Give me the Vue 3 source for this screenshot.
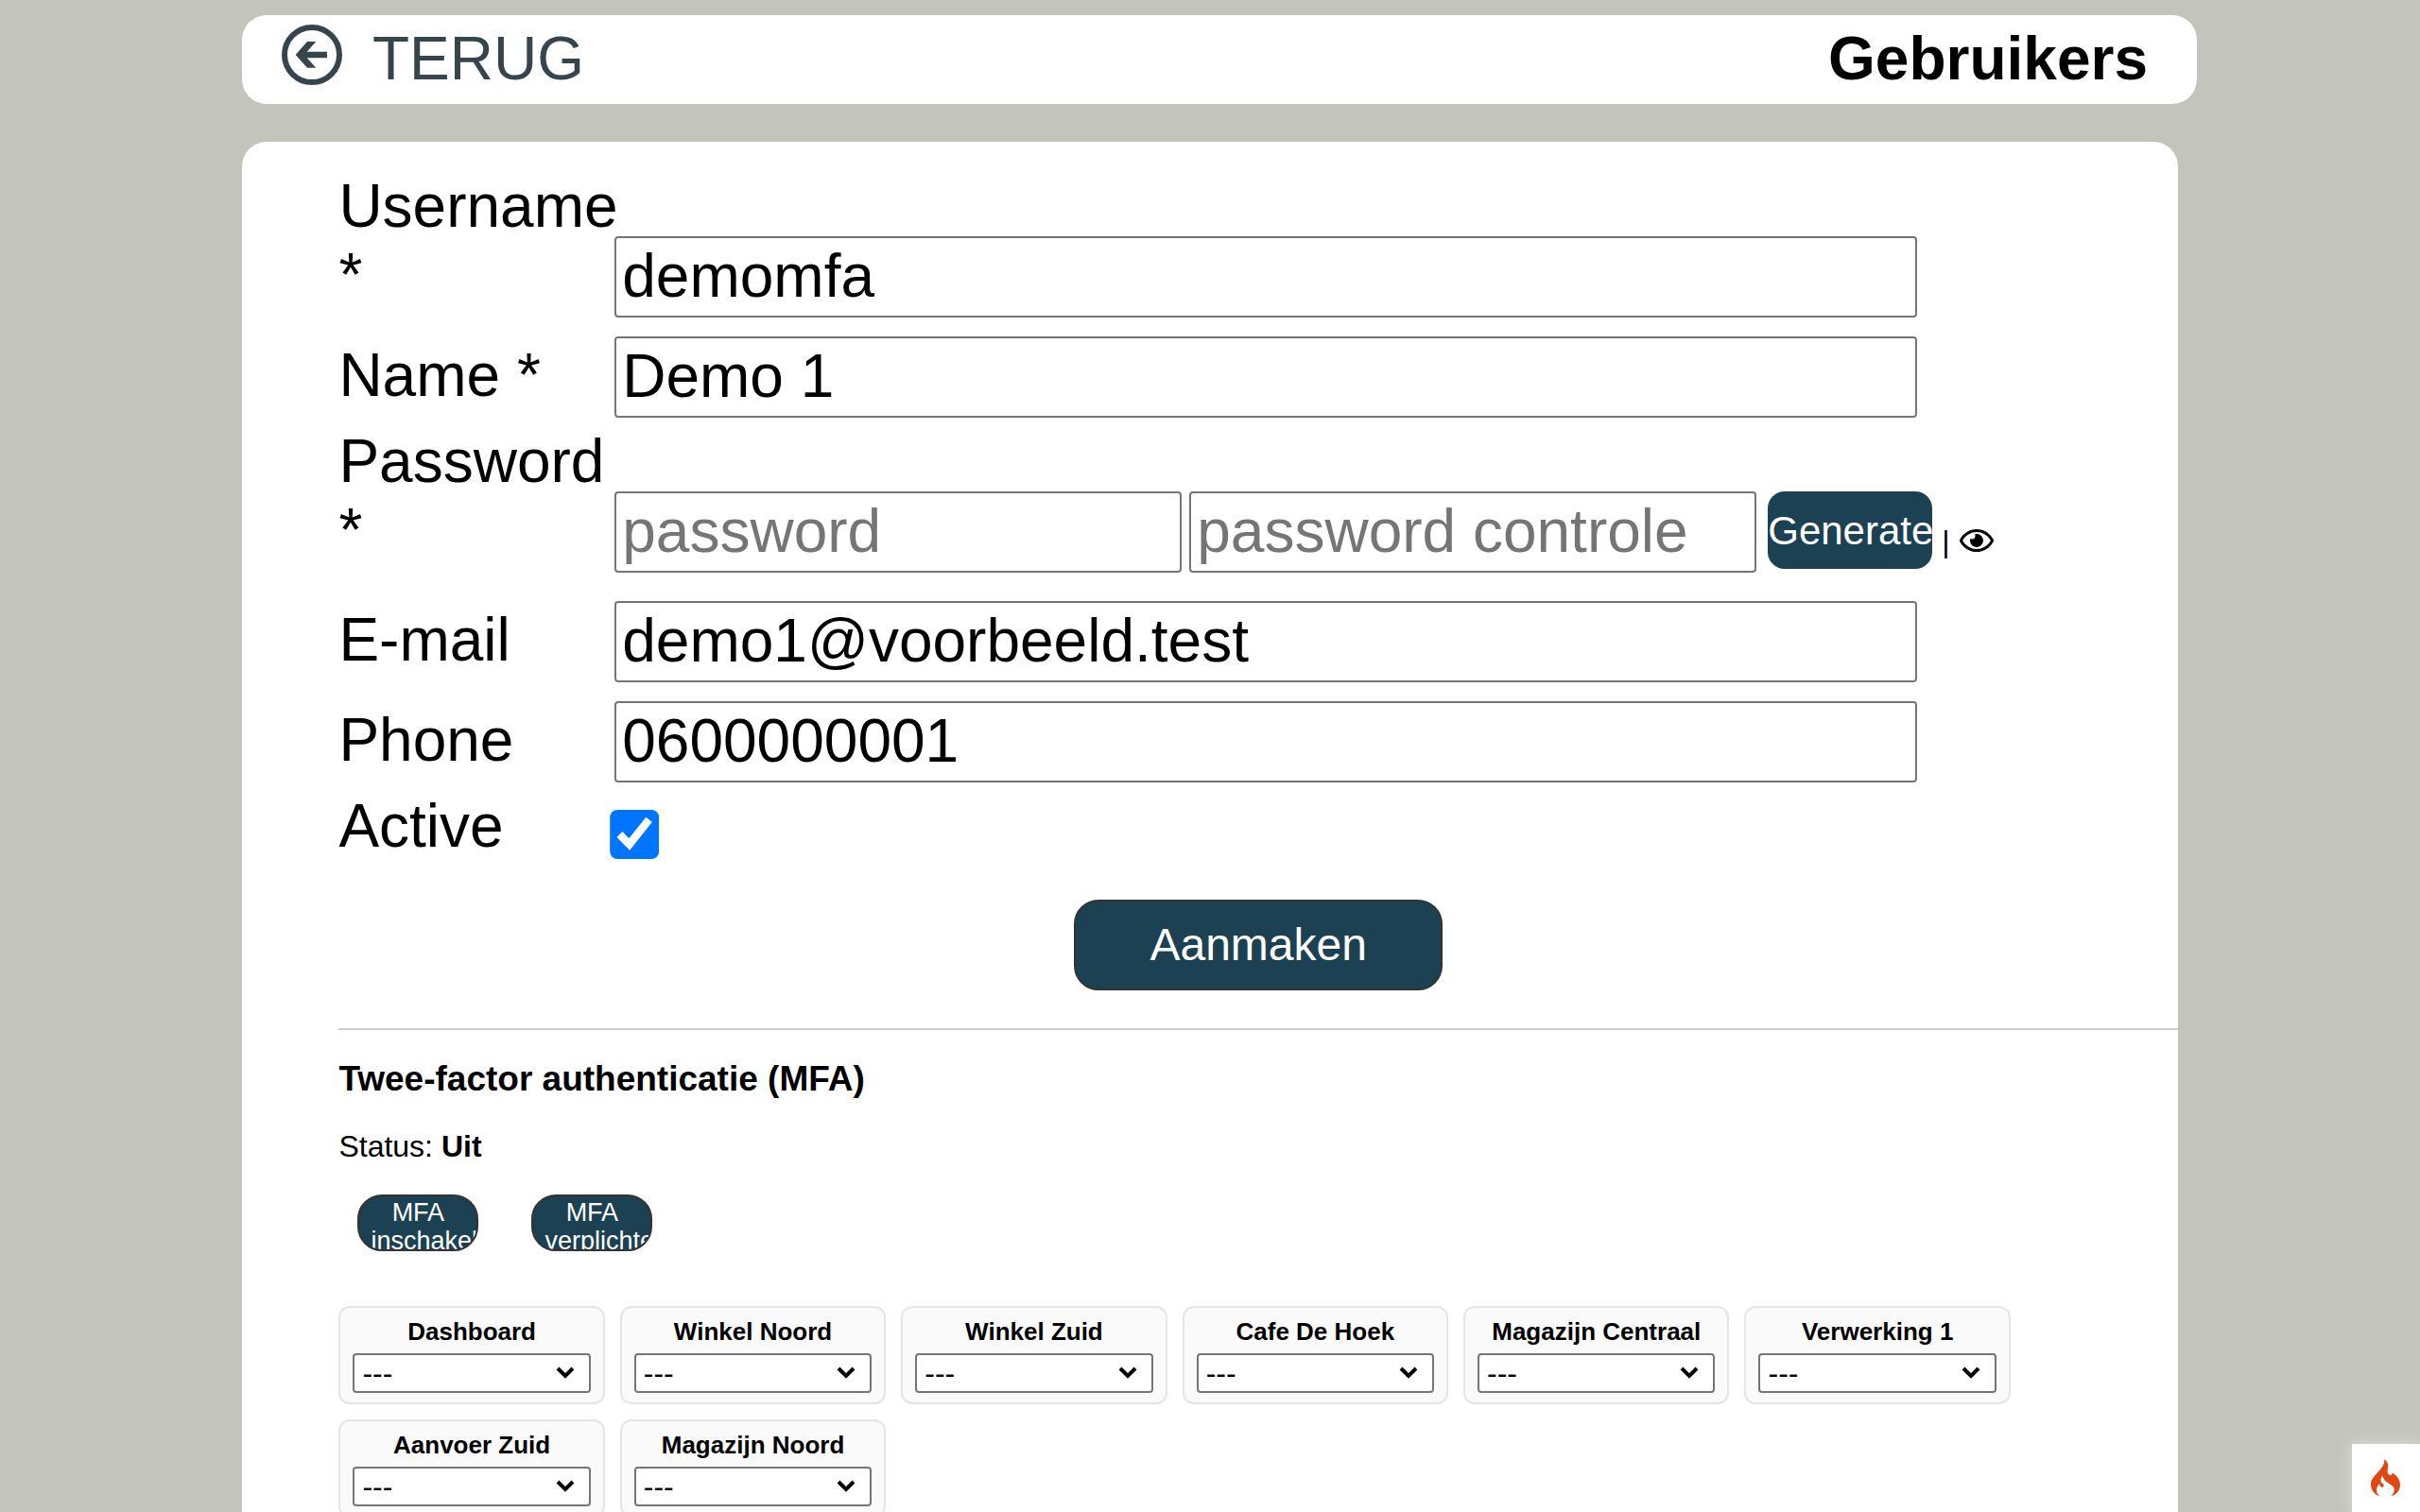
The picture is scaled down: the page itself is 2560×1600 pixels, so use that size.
<template>
  <div class="page">
    <header class="topbar">
      <a href="#" class="back">
        <svg class="back-icon" viewBox="0 0 192 192" aria-hidden="true">
          <circle cx="96" cy="96" r="87" fill="none" stroke="currentColor" stroke-width="18" />
          <path d="M44 96 81 54H109L80 86H144V106H80L109 137H81Z" fill="currentColor" />
        </svg>
        <span>TERUG</span>
      </a>
      <h1 class="title">Gebruikers</h1>
    </header>

    <main class="panel">
      <form @submit.prevent>
        <div class="row">
          <label for="username">Username *</label>
          <input id="username" v-model="user.username" type="text" class="field" />
        </div>
        <div class="row">
          <label for="name">Name *</label>
          <input id="name" v-model="user.name" type="text" class="field" />
        </div>
        <div class="row row-password">
          <label for="password">Password *</label>
          <div class="passwords">
            <input
              id="password"
              v-model="user.password"
              :type="passwordType"
              class="field"
              placeholder="password"
            />
            <input
              v-model="user.passwordCheck"
              :type="passwordType"
              class="field"
              placeholder="password controle"
              aria-label="password controle"
            />
            <button type="button" class="btn-generate" @click="generate">Generate</button>
            <span class="divider">|</span>
            <button type="button" class="btn-eye" aria-label="Toon password" @click="visible = !visible">
              <svg viewBox="0 64 576 384" aria-hidden="true">
                <path d="M288 144a110.94 110.94 0 0 0-31.24 5 55.4 55.4 0 0 1 7.24 27 56 56 0 0 1-56 56 55.4 55.4 0 0 1-27-7.24A111.71 111.71 0 1 0 288 144zm284.52 97.4C518.29 135.59 410.93 64 288 64S57.68 135.64 3.48 241.41a32.35 32.35 0 0 0 0 29.19C57.71 376.41 165.07 448 288 448s230.32-71.64 284.52-177.41a32.35 32.35 0 0 0 0-29.19zM288 400c-98.65 0-189.09-55-237.93-144C98.91 167 189.34 112 288 112s189.09 55 237.93 144C477.1 345 386.66 400 288 400z" />
              </svg>
            </button>
          </div>
        </div>
        <div class="row">
          <label for="email">E-mail</label>
          <input id="email" v-model="user.email" type="text" class="field" />
        </div>
        <div class="row">
          <label for="phone">Phone</label>
          <input id="phone" v-model="user.phone" type="text" class="field" />
        </div>
        <div class="row">
          <label for="active">Active</label>
          <input id="active" v-model="user.active" type="checkbox" class="check" />
        </div>
        <div class="submit">
          <button type="submit" class="btn-submit">Aanmaken</button>
        </div>
      </form>

      <section class="mfa">
        <h3>Twee-factor authenticatie (MFA)</h3>
        <p>Status: <b>Uit</b></p>
        <div class="mfa-actions">
          <button type="button" class="btn-small">MFA inschakelen</button>
          <button type="button" class="btn-small">MFA verplichten</button>
        </div>
      </section>

      <section class="rights">
        <div v-for="(place, i) in places" :key="place" class="card">
          <label :for="'right-' + i">{{ place }}</label>
          <div class="select-wrap">
            <select :id="'right-' + i">
              <option>---</option>
            </select>
            <svg class="chevron" viewBox="0 0 20 14" aria-hidden="true">
              <path d="M2 3 10 11 18 3" fill="none" stroke="#000" stroke-width="4" />
            </svg>
          </div>
        </div>
      </section>
    </main>

    <a href="#" class="debug" aria-label="Debug">
      <svg viewBox="0 0 93 120" aria-hidden="true">
        <path d="M28 118C10 111 0 97 0 80C0 52 45 34 43 1C54 9 56 18 54 29C51 41 54 50 61 51C67 51 69 48 68 43C81 52 93 64 93 83C93 99 82 112 64 118C71 112 76 104 74 94C72 82 53 78 43 66C39 60 38 56 39 52C31 60 29 68 34 75C39 80 43 81 41 86C37 92 27 90 28 78C16 88 14 106 28 118Z" />
      </svg>
    </a>
  </div>
</template>

<script setup>
import { reactive, ref, computed } from 'vue'

const user = reactive({
  username: 'demomfa',
  name: 'Demo 1',
  password: '',
  passwordCheck: '',
  email: 'demo1@voorbeeld.test',
  phone: '0600000001',
  active: true
})

const visible = ref(false)
const passwordType = computed(() => (visible.value ? 'text' : 'password'))

const places = [
  'Dashboard',
  'Winkel Noord',
  'Winkel Zuid',
  'Cafe De Hoek',
  'Magazijn Centraal',
  'Verwerking 1',
  'Aanvoer Zuid',
  'Magazijn Noord'
]

const generate = () => {
  const value = Math.random().toString(36).slice(2, 12)
  user.password = value
  user.passwordCheck = value
}
</script>

<style>
html,
body {
  height: 100%;
  margin: 0;
  background: #c3c4bb;
  overflow: hidden;
}

#app {
  height: 100%;
}
</style>

<style scoped>
.page {
  height: 100%;
  overflow: hidden;
  box-sizing: border-box;
  padding: 16px 10% 0;
  font-family: Arial, "Liberation Sans", sans-serif;
  font-size: 32px;
  color: #000;
}

button,
input,
select {
  font-family: inherit;
  box-sizing: border-box;
  margin: 0;
}

.topbar {
  display: flex;
  justify-content: space-between;
  align-items: flex-start;
  box-sizing: border-box;
  height: 94px;
  margin-right: -20px;
  padding: 10px 52px 0 42px;
  background: #fff;
  border-radius: 26px;
}

.back {
  display: flex;
  gap: 32px;
  font-size: 64px;
  line-height: 72px;
  color: #36454c;
  text-decoration: none;
}

.back-icon {
  width: 64px;
  height: 64px;
}

.title {
  margin: 0;
  font-size: 64px;
  line-height: 72px;
}

.panel {
  margin-top: 40px;
  min-height: 100%;
  box-sizing: border-box;
  padding: 32px 0 0 5%;
  background: #fff;
  border-radius: 26px;
}

.row {
  display: flex;
  align-items: flex-end;
}

.row-password {
  margin-bottom: 10px;
}

.row > label {
  flex: none;
  width: 15%;
  margin-bottom: 18px;
  font-size: 64px;
  line-height: 73px;
}

.field {
  width: 1378px;
  height: 86px;
  margin: 10px 0;
  padding: 0 6px 2px;
  font-size: 64px;
  color: #000;
  background: #fff;
  border: 2px solid #767676;
  border-radius: 4px;
}

.field::placeholder {
  color: #757575;
}

.passwords {
  display: flex;
  align-items: flex-start;
}

.passwords .field {
  width: 600px;
  margin-right: 8px;
}

.btn-generate {
  width: 174px;
  height: 82px;
  margin: 10px 0 0 4px;
  padding: 2px 0 0;
  font-size: 42px;
  color: #fff;
  background: #1b4152;
  border: 0;
  border-radius: 18px;
}

.divider {
  margin: 45px 10px 0;
  line-height: 37px;
}

.btn-eye {
  display: flex;
  margin-top: 50px;
  padding: 0;
  background: none;
  border: 0;
}

.btn-eye svg {
  width: 36px;
  height: 24px;
}

.check {
  width: 52px;
  height: 52px;
  margin: 0 0 20px -5px;
  clip-path: inset(0 round 8px);
}

.submit {
  display: flex;
  justify-content: center;
  padding: 23px 0 40px;
}

.btn-submit {
  width: 390px;
  height: 96px;
  padding: 0 0 2px;
  font-size: 48px;
  color: #fff;
  background: #1b4152;
  border: 2px solid #333;
  border-radius: 26px;
}

.mfa {
  border-top: 2px solid #ccc;
  padding-top: 30px;
}

.mfa h3 {
  margin: 0;
  font-size: 37px;
  line-height: 44px;
}

.mfa p {
  margin: 31px 0 0;
  line-height: 37px;
}

.mfa-actions {
  display: flex;
  gap: 56px;
  margin: 32px 0 58px 20px;
}

.btn-small {
  width: 128px;
  height: 60px;
  padding: 2px 12px 0;
  font-size: 27px;
  line-height: 30px;
  color: #fff;
  background: #1b4152;
  border: 2px solid #333;
  border-radius: 26px;
  overflow: hidden;
}

.rights {
  display: grid;
  grid-template-columns: repeat(6, 1fr);
  gap: 16px;
  width: calc(91% - 2px);
}

.card {
  box-sizing: border-box;
  height: 104px;
  padding: 10px 13px;
  background: #fafafa;
  border: 2px solid #e5e5e5;
  border-radius: 12px;
}

.card label {
  display: block;
  margin-bottom: 8px;
  font-size: 26px;
  font-weight: bold;
  line-height: 30px;
  text-align: center;
}

.select-wrap {
  position: relative;
}

.select-wrap select {
  display: block;
  width: 100%;
  height: 42px;
  padding: 0 8px;
  font-size: 32px;
  color: #000;
  background: #fff;
  border: 2px solid #767676;
  border-radius: 4px;
  appearance: none;
}

.chevron {
  position: absolute;
  top: 13px;
  right: 17px;
  width: 20px;
  height: 14px;
  pointer-events: none;
}

.debug {
  position: fixed;
  right: 0;
  bottom: 0;
  display: flex;
  box-sizing: border-box;
  width: 72px;
  height: 72px;
  padding: 16px 20px;
  background: #fff;
  box-shadow: 0 0 16px #dfdfdf;
}

.debug svg {
  width: 31px;
  height: 40px;
  fill: #dd4814;
}
</style>
